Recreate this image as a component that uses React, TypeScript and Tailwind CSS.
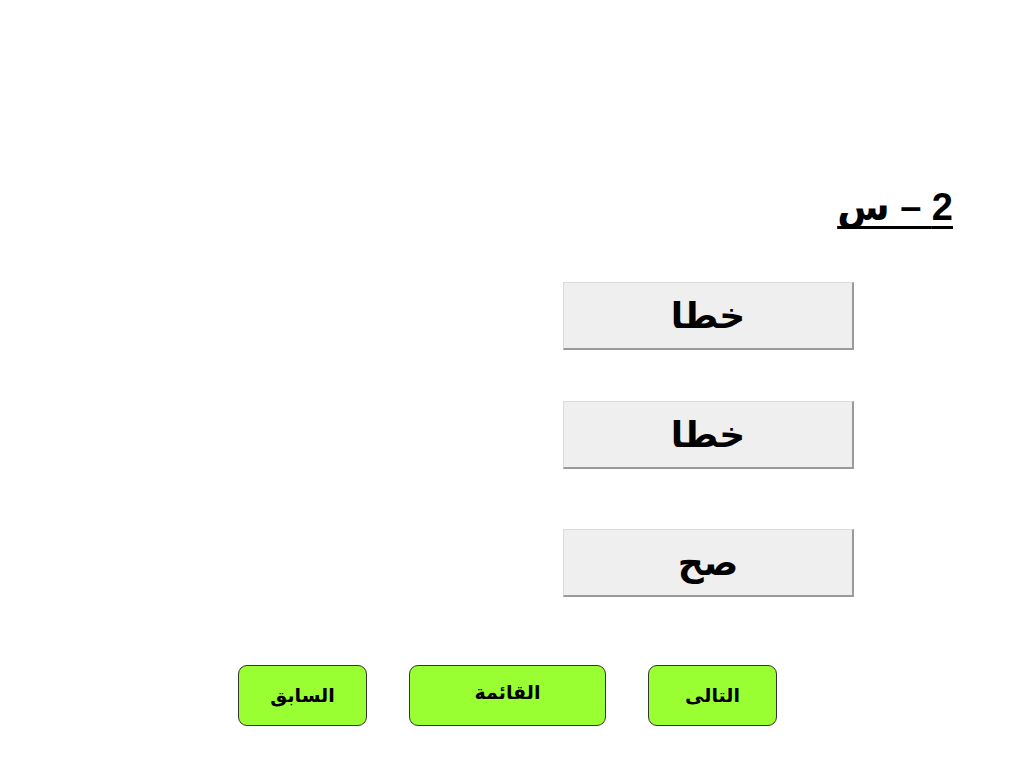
import React from 'react'

const answers = ['خطا', 'خطا', 'صح']

const App = () => {
  return (
    <div dir="rtl" className="w-[1024px] h-[768px] bg-white flex flex-col" style={{ fontFamily: '"DejaVu Sans", "Liberation Sans", sans-serif' }}>
      <div className="mt-[183px] pr-[71px] flex">
        <h1
          className="text-[38px] leading-[48px] font-bold text-black underline underline-offset-[6px] decoration-[3px]"
          style={{ fontFamily: '"Liberation Sans", "DejaVu Sans", sans-serif', textDecorationSkipInk: 'none' }}
        >
          2 – س
        </h1>
      </div>

      <div className="mt-[51px] pr-[170px] flex flex-col">
        {answers.map((a, i) => (
          <div
            key={i}
            className={`w-[291px] h-[68px] bg-[#efefef] border-t border-l border-t-[#dcdcdc] border-l-[#dcdcdc] border-r-2 border-b-2 border-r-[#9a9a9a] border-b-[#9a9a9a] flex items-center justify-center ${i === 1 ? 'mt-[51px]' : i === 2 ? 'mt-[60px]' : ''}`}
          >
            <span className="text-[36px] font-bold text-black leading-none">{a}</span>
          </div>
        ))}
      </div>

      <div dir="ltr" className="mt-[68px] pl-[238px] flex gap-[42px]">
        <button className="w-[129px] h-[61px] rounded-[9px] bg-[#99ff33] border border-[#333] text-[19px] font-bold text-black">السابق</button>
        <button className="w-[197px] h-[61px] rounded-[9px] bg-[#99ff33] border border-[#333] text-[19px] font-bold text-black pb-[6px]">القائمة</button>
        <button className="w-[129px] h-[61px] rounded-[9px] bg-[#99ff33] border border-[#333] text-[19px] font-bold text-black">التالى</button>
      </div>
    </div>
  )
}

export default App
